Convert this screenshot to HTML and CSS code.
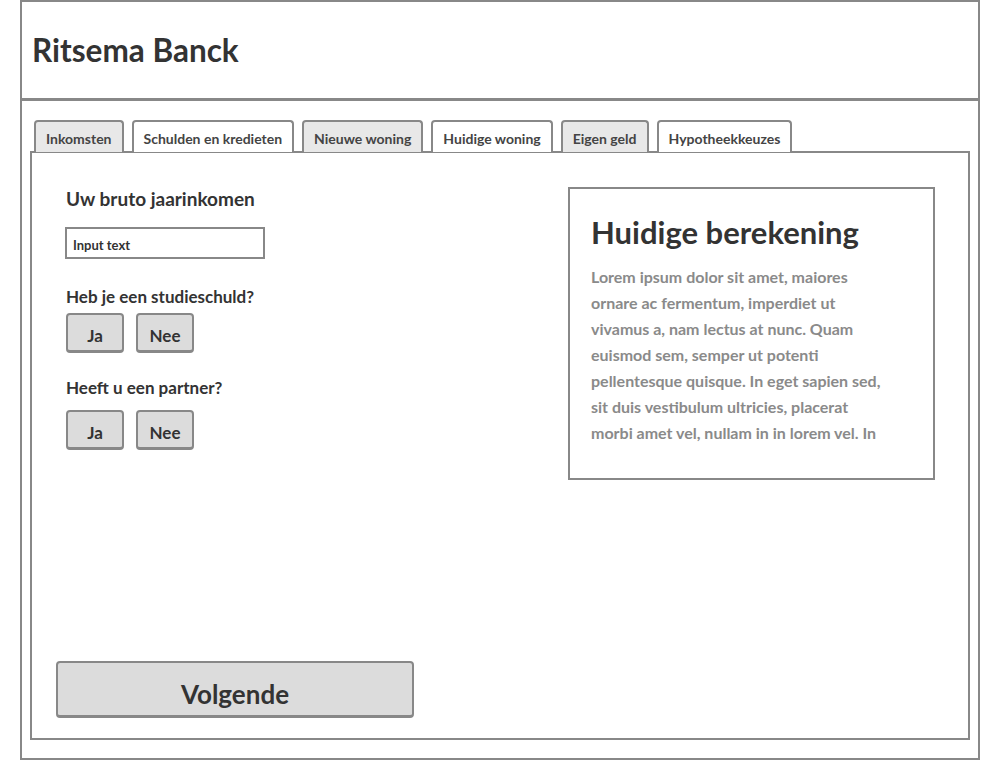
FILE: index.html
```html
<!DOCTYPE html>
<html lang="nl">
<head>
<meta charset="utf-8">
<title>Ritsema Banck</title>
<link rel="stylesheet" href="styles.css">
</head>
<body>
<div class="app">
  <header class="header">
    <h1 class="brand">Ritsema Banck</h1>
  </header>
  <main class="main">
    <nav class="tabs">
      <div class="tab tab-grey">Inkomsten</div>
      <div class="tab">Schulden en kredieten</div>
      <div class="tab tab-grey">Nieuwe woning</div>
      <div class="tab">Huidige woning</div>
      <div class="tab tab-grey">Eigen geld</div>
      <div class="tab">Hypotheekkeuzes</div>
    </nav>
    <section class="panel">
      <div class="panel-top">
        <div class="form">
          <h2 class="form-title">Uw bruto jaarinkomen</h2>
          <div class="input">Input text</div>
          <h3 class="question q1">Heb je een studieschuld?</h3>
          <div class="choices c1">
            <button class="choice">Ja</button>
            <button class="choice">Nee</button>
          </div>
          <h3 class="question q2">Heeft u een partner?</h3>
          <div class="choices c2">
            <button class="choice">Ja</button>
            <button class="choice">Nee</button>
          </div>
        </div>
        <aside class="summary">
          <h2 class="summary-title">Huidige berekening</h2>
          <p class="summary-text">Lorem ipsum dolor sit amet, maiores ornare ac fermentum, imperdiet ut vivamus a, nam lectus at nunc. Quam euismod sem, semper ut potenti pellentesque quisque. In eget sapien sed, sit duis vestibulum ultricies, placerat morbi amet vel, nullam in in lorem vel. In</p>
        </aside>
      </div>
      <button class="next">Volgende</button>
    </section>
  </main>
</div>
</body>
</html>
```

FILE: styles.css
```css
* { box-sizing: border-box; }
html, body { margin: 0; padding: 0; background: #fff; }
body {
  font-family: Lato, "Open Sans", "Liberation Sans", sans-serif;
  color: #333;
}
.app {
  width: 960px;
  height: 760px;
  margin-left: 20px;
  border: 2px solid #888;
  display: flex;
  flex-direction: column;
}
.header {
  height: 99px;
  border-bottom: 3px solid #888;
  display: flex;
  align-items: center;
  padding-left: 10px;
  flex: none;
}
.brand {
  margin: 0;
  font-size: 31.5px;
  font-weight: 700;
  line-height: 36px;
  color: #333;
}
.main {
  flex: 1;
  display: flex;
  flex-direction: column;
  padding: 19px 8px 18px 8px;
}
.tabs {
  display: flex;
  gap: 8px;
  padding-left: 4px;
  height: 32px;
  position: relative;
  z-index: 1;
}
.tab {
  height: 32px;
  border: 2px solid #888;
  border-bottom: none;
  border-radius: 4px 4px 0 0;
  background: #fff;
  font-size: 14px;
  font-weight: 700;
  color: #444;
  padding: 0 10px;
  line-height: 34px;
  white-space: nowrap;
}
.tab-grey { background: #e8e8e8; }
.panel {
  flex: 1;
  margin-top: -1px;
  border: 2px solid #888;
  display: flex;
  flex-direction: column;
  padding: 34px 33px 20px 24px;
}
.panel-top {
  display: flex;
  justify-content: space-between;
}
.form {
  padding-left: 10px;
  width: 260px;
}
.form-title {
  margin: 0;
  font-size: 19px;
  line-height: 24px;
  font-weight: 700;
}
.input {
  margin-top: 16px;
  width: 200px;
  height: 32px;
  border: 2px solid #888;
  margin-left: -1px;
  font-size: 13px;
  font-weight: 700;
  padding-left: 6px;
  line-height: 33px;
  color: #333;
}
.question {
  margin: 0;
  font-size: 17px;
  line-height: 22px;
  font-weight: 700;
}
.q1 { margin-top: 27px; }
.q2 { margin-top: 24px; }
.choices {
  display: flex;
  gap: 12px;
}
.c1 { margin-top: 5px; }
.c2 { margin-top: 11px; }
.choice {
  width: 58px;
  height: 40px;
  background: #dcdcdc;
  border: 2px solid #888;
  border-bottom-width: 3px;
  border-radius: 4px;
  font-family: inherit;
  font-size: 17px;
  font-weight: 700;
  color: #333;
  padding: 7px 0 0 0;
  line-height: 28px;
}
.summary {
  width: 367px;
  height: 293px;
  border: 2px solid #888;
  padding: 21px 20px 0 21px;
  overflow: hidden;
}
.summary-title {
  margin: 0;
  font-size: 31px;
  line-height: 44px;
  font-weight: 700;
  color: #333;
}
.summary-text {
  margin: 10px 0 0 0;
  width: 298px;
  font-size: 16px;
  line-height: 26px;
  font-weight: 700;
  color: #8a8a8a;
}
.next {
  margin-top: auto;
  width: 358px;
  height: 57px;
  background: #dcdcdc;
  border: 2px solid #888;
  border-bottom-width: 3px;
  border-radius: 4px;
  font-family: inherit;
  font-size: 26px;
  font-weight: 700;
  color: #333;
  padding: 9px 0 0 0;
}
```
